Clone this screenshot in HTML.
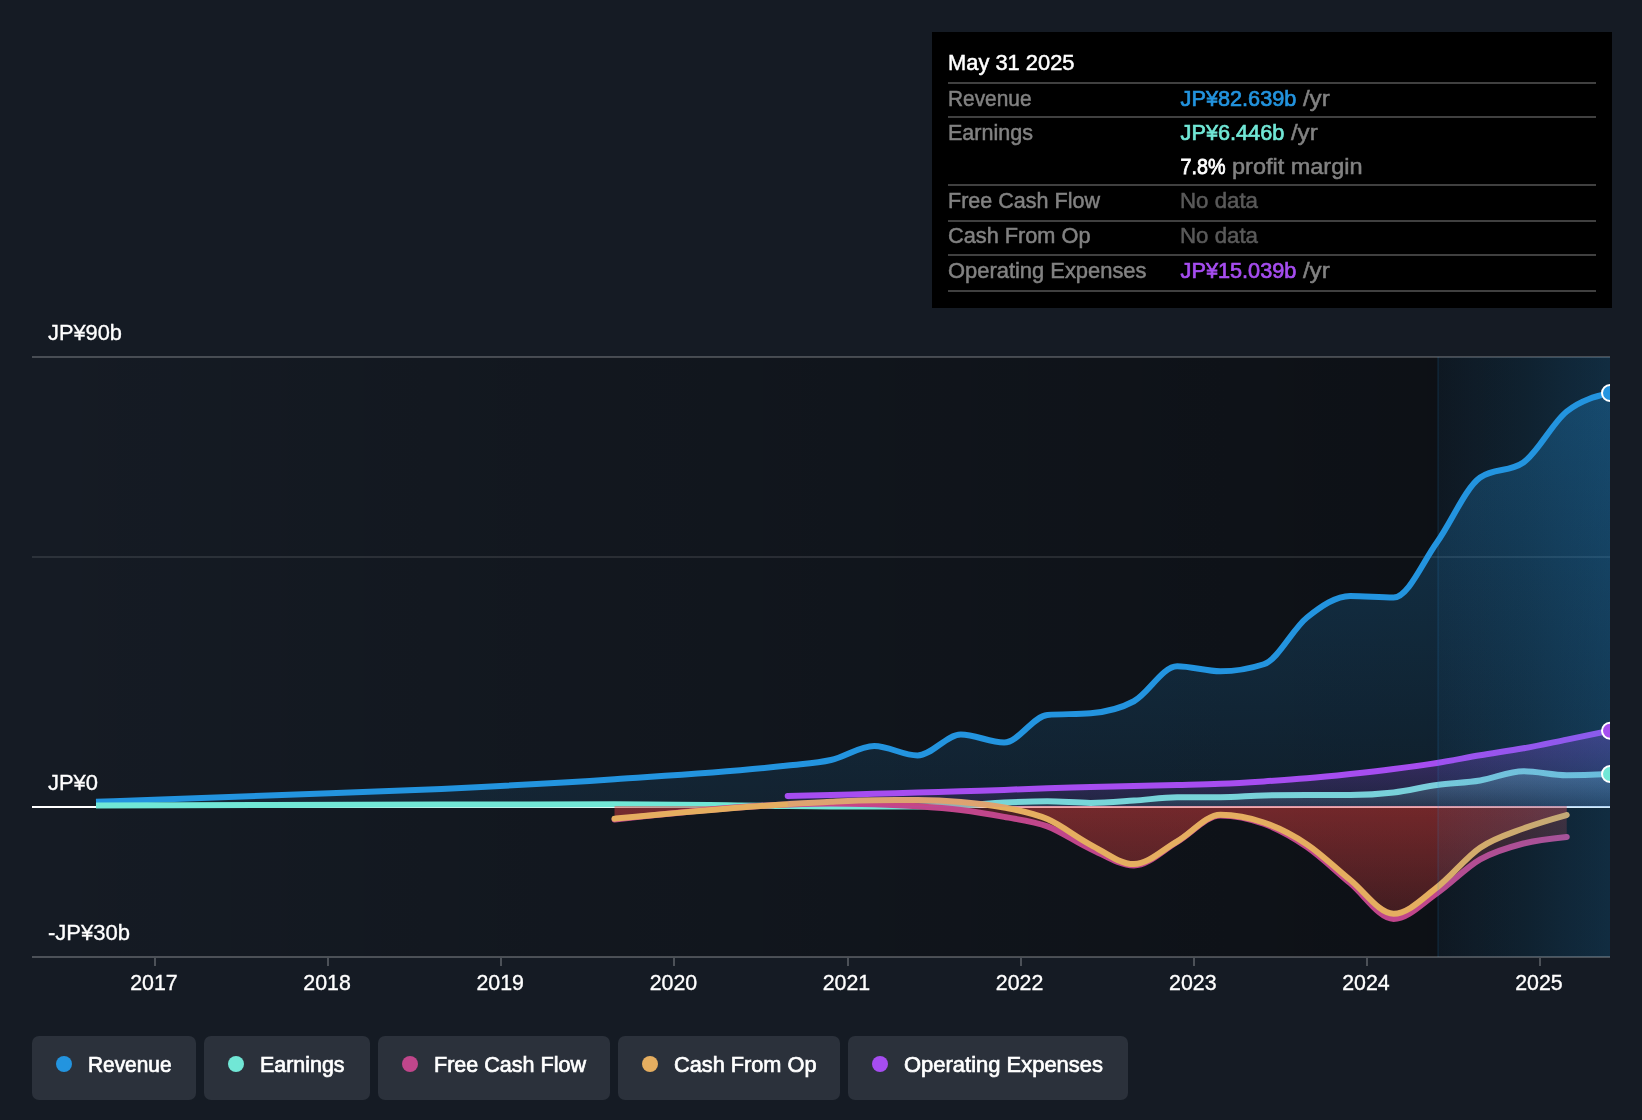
<!DOCTYPE html>
<html lang="en"><head><meta charset="utf-8"><title>Earnings and Revenue History</title>
<style>html,body{margin:0;padding:0;background:#151b24;}body{width:1642px;height:1120px;overflow:hidden;}svg{display:block;will-change:transform;}text{font-family:'Liberation Sans', sans-serif;font-size:22px;}</style>
</head><body>
<svg width="1642" height="1120" viewBox="0 0 1642 1120">
<defs>
<linearGradient id="gPlot" x1="0" y1="0" x2="1" y2="0"><stop offset="0" stop-color="#000" stop-opacity="0"/><stop offset="1" stop-color="#000" stop-opacity="0.44"/></linearGradient>
<linearGradient id="gRev" gradientUnits="userSpaceOnUse" x1="0" y1="393" x2="0" y2="807"><stop offset="0" stop-color="#2394df" stop-opacity="0.29"/><stop offset="1" stop-color="#2394df" stop-opacity="0.10"/></linearGradient>
<linearGradient id="gEar" gradientUnits="userSpaceOnUse" x1="0" y1="771" x2="0" y2="807"><stop offset="0" stop-color="#71e7d6" stop-opacity="0.35"/><stop offset="1" stop-color="#71e7d6" stop-opacity="0.10"/></linearGradient>
<linearGradient id="gOpx" gradientUnits="userSpaceOnUse" x1="0" y1="730" x2="0" y2="807"><stop offset="0" stop-color="#a64df0" stop-opacity="0.35"/><stop offset="1" stop-color="#a64df0" stop-opacity="0.10"/></linearGradient>
<linearGradient id="gRed" gradientUnits="userSpaceOnUse" x1="0" y1="806" x2="0" y2="920"><stop offset="0" stop-color="#e64141" stop-opacity="0.27"/><stop offset="1" stop-color="#e64141" stop-opacity="0.12"/></linearGradient>
<linearGradient id="gHi" x1="0" y1="0" x2="1" y2="0"><stop offset="0" stop-color="#2394df" stop-opacity="0.06"/><stop offset="0.5" stop-color="#2394df" stop-opacity="0.13"/><stop offset="1" stop-color="#2394df" stop-opacity="0.22"/></linearGradient>
<clipPath id="cp"><rect x="32" y="340" width="1578" height="640"/></clipPath>
</defs>
<rect width="1642" height="1120" fill="#151b24"/>
<rect x="32" y="357" width="1578" height="600" fill="url(#gPlot)"/>
<rect x="32" y="356" width="1578" height="2" fill="#fff" fill-opacity="0.22"/>
<rect x="32" y="556" width="1578" height="2" fill="#fff" fill-opacity="0.10"/>
<rect x="32" y="806" width="1578" height="2" fill="#fff"/>
<g clip-path="url(#cp)" fill="none" stroke-width="6" stroke-linejoin="round">
<path d="M96.00,801.75C153.44,799.69 210.88,797.64 268.32,795.50C326.03,793.35 383.73,791.62 441.44,788.90C499.15,786.18 556.85,783.10 614.56,779.20C672.27,775.30 729.97,772.28 787.68,765.50C802.11,763.80 816.53,763.25 830.96,760.00C845.39,756.75 859.81,746.00 874.24,746.00C888.67,746.00 903.09,755.50 917.52,755.50C931.95,755.50 946.37,734.50 960.80,734.50C975.23,734.50 989.65,742.50 1004.08,742.50C1018.51,742.50 1032.93,716.17 1047.36,715.00C1061.79,713.83 1076.21,714.42 1090.64,713.25C1105.07,712.08 1119.49,709.08 1133.92,701.25C1148.35,693.42 1162.77,666.25 1177.20,666.25C1191.63,666.25 1206.05,671.25 1220.48,671.25C1234.91,671.25 1249.33,668.92 1263.76,664.25C1278.19,659.58 1292.61,628.88 1307.04,617.50C1321.47,606.12 1335.89,596.00 1350.32,596.00C1364.75,596.00 1379.17,597.50 1393.60,597.50C1408.03,597.50 1422.45,562.50 1436.88,542.50C1451.31,522.50 1465.73,487.50 1480.16,477.50C1494.59,467.50 1509.01,472.50 1523.44,462.50C1537.87,452.50 1552.29,423.08 1566.72,411.50C1581.15,399.92 1595.57,396.46 1610.00,393.00L1610.00,807.00 L96.00,807.00 Z" fill="url(#gRev)"/>
<path d="M96.00,801.75C153.44,799.69 210.88,797.64 268.32,795.50C326.03,793.35 383.73,791.62 441.44,788.90C499.15,786.18 556.85,783.10 614.56,779.20C672.27,775.30 729.97,772.28 787.68,765.50C802.11,763.80 816.53,763.25 830.96,760.00C845.39,756.75 859.81,746.00 874.24,746.00C888.67,746.00 903.09,755.50 917.52,755.50C931.95,755.50 946.37,734.50 960.80,734.50C975.23,734.50 989.65,742.50 1004.08,742.50C1018.51,742.50 1032.93,716.17 1047.36,715.00C1061.79,713.83 1076.21,714.42 1090.64,713.25C1105.07,712.08 1119.49,709.08 1133.92,701.25C1148.35,693.42 1162.77,666.25 1177.20,666.25C1191.63,666.25 1206.05,671.25 1220.48,671.25C1234.91,671.25 1249.33,668.92 1263.76,664.25C1278.19,659.58 1292.61,628.88 1307.04,617.50C1321.47,606.12 1335.89,596.00 1350.32,596.00C1364.75,596.00 1379.17,597.50 1393.60,597.50C1408.03,597.50 1422.45,562.50 1436.88,542.50C1451.31,522.50 1465.73,487.50 1480.16,477.50C1494.59,467.50 1509.01,472.50 1523.44,462.50C1537.87,452.50 1552.29,423.08 1566.72,411.50C1581.15,399.92 1595.57,396.46 1610.00,393.00" stroke="#2394df"/>
<path d="M96.00,805.60C153.44,805.38 210.88,805.17 268.32,805.00C326.03,804.83 383.73,804.72 441.44,804.60C499.15,804.48 556.85,804.30 614.56,804.30C672.27,804.30 729.97,805.46 787.68,806.00C802.11,806.13 816.53,806.40 830.96,806.40C845.39,806.40 859.81,806.40 874.24,806.40C888.67,806.40 903.09,806.40 917.52,806.40C931.95,806.40 946.37,805.95 960.80,805.30C975.23,804.65 989.65,803.17 1004.08,802.50C1018.51,801.83 1032.93,801.25 1047.36,801.25C1061.79,801.25 1076.21,802.90 1090.64,802.90C1105.07,802.90 1119.49,801.54 1133.92,800.60C1148.35,799.66 1162.77,797.25 1177.20,797.25C1191.63,797.25 1206.05,797.25 1220.48,797.25C1234.91,797.25 1249.33,795.83 1263.76,795.50C1278.19,795.17 1292.61,795.00 1307.04,795.00C1321.47,795.00 1335.89,795.00 1350.32,795.00C1364.75,795.00 1379.17,794.17 1393.60,792.50C1408.03,790.83 1422.45,787.00 1436.88,785.00C1451.31,783.00 1465.73,782.79 1480.16,780.50C1494.59,778.21 1509.01,771.25 1523.44,771.25C1537.87,771.25 1552.29,775.20 1566.72,775.20C1581.15,775.20 1595.57,774.60 1610.00,774.00L1610.00,807.00 L96.00,807.00 Z" fill="url(#gEar)"/>
<path d="M96.00,805.60C153.44,805.38 210.88,805.17 268.32,805.00C326.03,804.83 383.73,804.72 441.44,804.60C499.15,804.48 556.85,804.30 614.56,804.30C672.27,804.30 729.97,805.46 787.68,806.00C802.11,806.13 816.53,806.40 830.96,806.40C845.39,806.40 859.81,806.40 874.24,806.40C888.67,806.40 903.09,806.40 917.52,806.40C931.95,806.40 946.37,805.95 960.80,805.30C975.23,804.65 989.65,803.17 1004.08,802.50C1018.51,801.83 1032.93,801.25 1047.36,801.25C1061.79,801.25 1076.21,802.90 1090.64,802.90C1105.07,802.90 1119.49,801.54 1133.92,800.60C1148.35,799.66 1162.77,797.25 1177.20,797.25C1191.63,797.25 1206.05,797.25 1220.48,797.25C1234.91,797.25 1249.33,795.83 1263.76,795.50C1278.19,795.17 1292.61,795.00 1307.04,795.00C1321.47,795.00 1335.89,795.00 1350.32,795.00C1364.75,795.00 1379.17,794.17 1393.60,792.50C1408.03,790.83 1422.45,787.00 1436.88,785.00C1451.31,783.00 1465.73,782.79 1480.16,780.50C1494.59,778.21 1509.01,771.25 1523.44,771.25C1537.87,771.25 1552.29,775.20 1566.72,775.20C1581.15,775.20 1595.57,774.60 1610.00,774.00" stroke="#71e7d6"/>
<path d="M614.56,819.40C672.27,813.03 729.97,806.67 787.68,804.50C802.11,803.96 816.53,803.40 830.96,803.40C845.39,803.40 859.81,803.82 874.24,804.30C888.67,804.77 903.09,805.30 917.52,806.25C931.95,807.20 946.37,808.23 960.80,810.00C975.23,811.77 989.65,814.17 1004.08,816.90C1018.51,819.63 1032.93,821.05 1047.36,826.40C1061.79,831.75 1076.21,842.50 1090.64,849.00C1105.07,855.50 1119.49,865.40 1133.92,865.40C1148.35,865.40 1162.77,850.23 1177.20,841.90C1191.63,833.57 1206.05,815.40 1220.48,815.40C1234.91,815.40 1249.33,818.48 1263.76,823.75C1278.19,829.02 1292.61,837.08 1307.04,847.00C1321.47,856.92 1335.89,871.27 1350.32,883.25C1364.75,895.23 1379.17,918.90 1393.60,918.90C1408.03,918.90 1422.45,903.17 1436.88,893.25C1451.31,883.33 1465.73,867.69 1480.16,859.40C1494.59,851.11 1509.01,847.25 1523.44,843.50C1537.87,839.75 1552.29,838.33 1566.72,836.90L1566.72,806.00 L614.56,806.00 Z" fill="url(#gRed)"/>
<path d="M614.56,819.40C672.27,813.03 729.97,806.67 787.68,804.50C802.11,803.96 816.53,803.40 830.96,803.40C845.39,803.40 859.81,803.82 874.24,804.30C888.67,804.77 903.09,805.30 917.52,806.25C931.95,807.20 946.37,808.23 960.80,810.00C975.23,811.77 989.65,814.17 1004.08,816.90C1018.51,819.63 1032.93,821.05 1047.36,826.40C1061.79,831.75 1076.21,842.50 1090.64,849.00C1105.07,855.50 1119.49,865.40 1133.92,865.40C1148.35,865.40 1162.77,850.23 1177.20,841.90C1191.63,833.57 1206.05,815.40 1220.48,815.40C1234.91,815.40 1249.33,818.48 1263.76,823.75C1278.19,829.02 1292.61,837.08 1307.04,847.00C1321.47,856.92 1335.89,871.27 1350.32,883.25C1364.75,895.23 1379.17,918.90 1393.60,918.90C1408.03,918.90 1422.45,903.17 1436.88,893.25C1451.31,883.33 1465.73,867.69 1480.16,859.40C1494.59,851.11 1509.01,847.25 1523.44,843.50C1537.87,839.75 1552.29,838.33 1566.72,836.90" stroke="#c0468b" stroke-linecap="round"/>
<path d="M614.56,818.70C672.27,813.27 729.97,807.83 787.68,804.20C802.11,803.29 816.53,802.37 830.96,801.70C845.39,801.03 859.81,800.27 874.24,800.20C888.67,800.13 903.09,800.10 917.52,800.10C931.95,800.10 946.37,800.70 960.80,801.90C975.23,803.10 989.65,804.63 1004.08,807.50C1018.51,810.37 1032.93,812.88 1047.36,819.10C1061.79,825.32 1076.21,837.30 1090.64,844.80C1105.07,852.30 1119.49,864.10 1133.92,864.10C1148.35,864.10 1162.77,849.52 1177.20,841.30C1191.63,833.07 1206.05,814.75 1220.48,814.75C1234.91,814.75 1249.33,817.56 1263.76,822.50C1278.19,827.44 1292.61,834.82 1307.04,844.40C1321.47,853.98 1335.89,868.44 1350.32,880.00C1364.75,891.56 1379.17,913.75 1393.60,913.75C1408.03,913.75 1422.45,898.49 1436.88,887.50C1451.31,876.51 1465.73,857.63 1480.16,847.80C1494.59,837.97 1509.01,833.97 1523.44,828.50C1537.87,823.03 1552.29,819.02 1566.72,815.00L1566.72,806.00 L614.56,806.00 Z" fill="url(#gRed)"/>
<path d="M614.56,818.70C672.27,813.27 729.97,807.83 787.68,804.20C802.11,803.29 816.53,802.37 830.96,801.70C845.39,801.03 859.81,800.27 874.24,800.20C888.67,800.13 903.09,800.10 917.52,800.10C931.95,800.10 946.37,800.70 960.80,801.90C975.23,803.10 989.65,804.63 1004.08,807.50C1018.51,810.37 1032.93,812.88 1047.36,819.10C1061.79,825.32 1076.21,837.30 1090.64,844.80C1105.07,852.30 1119.49,864.10 1133.92,864.10C1148.35,864.10 1162.77,849.52 1177.20,841.30C1191.63,833.07 1206.05,814.75 1220.48,814.75C1234.91,814.75 1249.33,817.56 1263.76,822.50C1278.19,827.44 1292.61,834.82 1307.04,844.40C1321.47,853.98 1335.89,868.44 1350.32,880.00C1364.75,891.56 1379.17,913.75 1393.60,913.75C1408.03,913.75 1422.45,898.49 1436.88,887.50C1451.31,876.51 1465.73,857.63 1480.16,847.80C1494.59,837.97 1509.01,833.97 1523.44,828.50C1537.87,823.03 1552.29,819.02 1566.72,815.00" stroke="#e5ae60" stroke-linecap="round"/>
<path d="M787.68,796.00C802.11,795.68 816.53,795.37 830.96,795.00C845.39,794.63 859.81,794.20 874.24,793.80C888.67,793.40 903.09,793.02 917.52,792.60C931.95,792.18 946.37,791.75 960.80,791.30C975.23,790.85 989.65,790.42 1004.08,789.90C1018.51,789.38 1032.93,788.68 1047.36,788.20C1061.79,787.72 1076.21,787.37 1090.64,787.00C1105.07,786.63 1119.49,786.33 1133.92,786.00C1148.35,785.67 1162.77,785.37 1177.20,785.00C1191.63,784.63 1206.05,784.40 1220.48,783.80C1234.91,783.20 1249.33,782.32 1263.76,781.40C1278.19,780.48 1292.61,779.53 1307.04,778.30C1321.47,777.07 1335.89,775.55 1350.32,774.00C1364.75,772.45 1379.17,770.83 1393.60,769.00C1408.03,767.17 1422.45,765.28 1436.88,763.00C1451.31,760.72 1465.73,757.75 1480.16,755.30C1494.59,752.85 1509.01,750.92 1523.44,748.30C1537.87,745.68 1552.29,742.52 1566.72,739.60C1581.15,736.68 1595.57,733.71 1610.00,730.75L1610.00,807.00 L787.68,807.00 Z" fill="url(#gOpx)"/>
<path d="M787.68,796.00C802.11,795.68 816.53,795.37 830.96,795.00C845.39,794.63 859.81,794.20 874.24,793.80C888.67,793.40 903.09,793.02 917.52,792.60C931.95,792.18 946.37,791.75 960.80,791.30C975.23,790.85 989.65,790.42 1004.08,789.90C1018.51,789.38 1032.93,788.68 1047.36,788.20C1061.79,787.72 1076.21,787.37 1090.64,787.00C1105.07,786.63 1119.49,786.33 1133.92,786.00C1148.35,785.67 1162.77,785.37 1177.20,785.00C1191.63,784.63 1206.05,784.40 1220.48,783.80C1234.91,783.20 1249.33,782.32 1263.76,781.40C1278.19,780.48 1292.61,779.53 1307.04,778.30C1321.47,777.07 1335.89,775.55 1350.32,774.00C1364.75,772.45 1379.17,770.83 1393.60,769.00C1408.03,767.17 1422.45,765.28 1436.88,763.00C1451.31,760.72 1465.73,757.75 1480.16,755.30C1494.59,752.85 1509.01,750.92 1523.44,748.30C1537.87,745.68 1552.29,742.52 1566.72,739.60C1581.15,736.68 1595.57,733.71 1610.00,730.75" stroke="#a64df0" stroke-linecap="round"/>
<rect x="1438" y="357" width="172" height="600" fill="url(#gHi)"/>
<rect x="1437" y="357" width="2" height="600" fill="#2394df" fill-opacity="0.10"/>
<circle cx="1610" cy="393.00" r="8" fill="#2394df" stroke="#fff" stroke-width="2"/>
<circle cx="1610" cy="730.75" r="8" fill="#a64df0" stroke="#fff" stroke-width="2"/>
<circle cx="1610" cy="774.00" r="8" fill="#71e7d6" stroke="#fff" stroke-width="2"/>
</g>
<rect x="32" y="956" width="1578" height="2" fill="#fff" fill-opacity="0.24"/>
<rect x="154.0" y="958" width="2" height="8" fill="#fff" fill-opacity="0.24"/>
<rect x="327.0" y="958" width="2" height="8" fill="#fff" fill-opacity="0.24"/>
<rect x="500.0" y="958" width="2" height="8" fill="#fff" fill-opacity="0.24"/>
<rect x="673.0" y="958" width="2" height="8" fill="#fff" fill-opacity="0.24"/>
<rect x="847.0" y="958" width="2" height="8" fill="#fff" fill-opacity="0.24"/>
<rect x="1020.0" y="958" width="2" height="8" fill="#fff" fill-opacity="0.24"/>
<rect x="1193.0" y="958" width="2" height="8" fill="#fff" fill-opacity="0.24"/>
<rect x="1366.0" y="958" width="2" height="8" fill="#fff" fill-opacity="0.24"/>
<rect x="1539.0" y="958" width="2" height="8" fill="#fff" fill-opacity="0.24"/>
<text x="154.0" y="990" fill="#fff" stroke="#fff" stroke-width="0.35" text-anchor="middle" textLength="47.5" lengthAdjust="spacingAndGlyphs">2017</text>
<text x="327.1" y="990" fill="#fff" stroke="#fff" stroke-width="0.35" text-anchor="middle" textLength="47.5" lengthAdjust="spacingAndGlyphs">2018</text>
<text x="500.2" y="990" fill="#fff" stroke="#fff" stroke-width="0.35" text-anchor="middle" textLength="47.5" lengthAdjust="spacingAndGlyphs">2019</text>
<text x="673.4" y="990" fill="#fff" stroke="#fff" stroke-width="0.35" text-anchor="middle" textLength="47.5" lengthAdjust="spacingAndGlyphs">2020</text>
<text x="846.5" y="990" fill="#fff" stroke="#fff" stroke-width="0.35" text-anchor="middle" textLength="47.5" lengthAdjust="spacingAndGlyphs">2021</text>
<text x="1019.6" y="990" fill="#fff" stroke="#fff" stroke-width="0.35" text-anchor="middle" textLength="47.5" lengthAdjust="spacingAndGlyphs">2022</text>
<text x="1192.8" y="990" fill="#fff" stroke="#fff" stroke-width="0.35" text-anchor="middle" textLength="47.5" lengthAdjust="spacingAndGlyphs">2023</text>
<text x="1365.9" y="990" fill="#fff" stroke="#fff" stroke-width="0.35" text-anchor="middle" textLength="47.5" lengthAdjust="spacingAndGlyphs">2024</text>
<text x="1539.0" y="990" fill="#fff" stroke="#fff" stroke-width="0.35" text-anchor="middle" textLength="47.5" lengthAdjust="spacingAndGlyphs">2025</text>
<text x="48" y="340" fill="#fff" stroke="#fff" stroke-width="0.35" textLength="74" lengthAdjust="spacingAndGlyphs">JP¥90b</text>
<text x="48" y="790" fill="#fff" stroke="#fff" stroke-width="0.35" textLength="50" lengthAdjust="spacingAndGlyphs">JP¥0</text>
<text x="48" y="940" fill="#fff" stroke="#fff" stroke-width="0.35" textLength="82" lengthAdjust="spacingAndGlyphs">-JP¥30b</text>
<rect x="932" y="32" width="680" height="276" fill="#000"/>
<rect x="948" y="82" width="648" height="2" fill="#fff" fill-opacity="0.25"/>
<rect x="948" y="116" width="648" height="2" fill="#fff" fill-opacity="0.25"/>
<rect x="948" y="184" width="648" height="2" fill="#fff" fill-opacity="0.25"/>
<rect x="948" y="220" width="648" height="2" fill="#fff" fill-opacity="0.25"/>
<rect x="948" y="254" width="648" height="2" fill="#fff" fill-opacity="0.25"/>
<rect x="948" y="290" width="648" height="2" fill="#fff" fill-opacity="0.25"/>
<text x="948" y="69.8" fill="#fff" stroke="#fff" stroke-width="0.5" textLength="126.5" lengthAdjust="spacingAndGlyphs">May 31 2025</text>
<text x="948" y="105.8" fill="#828282" stroke="#828282" stroke-width="0.5" textLength="83.5" lengthAdjust="spacingAndGlyphs">Revenue</text>
<text x="948" y="139.6" fill="#828282" stroke="#828282" stroke-width="0.5" textLength="85" lengthAdjust="spacingAndGlyphs">Earnings</text>
<text x="948" y="207.6" fill="#828282" stroke="#828282" stroke-width="0.5" textLength="152" lengthAdjust="spacingAndGlyphs">Free Cash Flow</text>
<text x="948" y="243.3" fill="#828282" stroke="#828282" stroke-width="0.5" textLength="142.5" lengthAdjust="spacingAndGlyphs">Cash From Op</text>
<text x="948" y="277.6" fill="#828282" stroke="#828282" stroke-width="0.5" textLength="198.5" lengthAdjust="spacingAndGlyphs">Operating Expenses</text>
<text x="1180.6" y="105.8" fill="#2394df" stroke="#2394df" stroke-width="0.7" textLength="115.7" lengthAdjust="spacingAndGlyphs">JP¥82.639b</text>
<text x="1302.9" y="105.8" fill="#828282" stroke="#828282" stroke-width="0.5" textLength="26.8" lengthAdjust="spacingAndGlyphs">/yr</text>
<text x="1180.6" y="139.6" fill="#71e7d6" stroke="#71e7d6" stroke-width="0.7" textLength="103.7" lengthAdjust="spacingAndGlyphs">JP¥6.446b</text>
<text x="1290.9" y="139.6" fill="#828282" stroke="#828282" stroke-width="0.5" textLength="26.8" lengthAdjust="spacingAndGlyphs">/yr</text>
<text x="1180.6" y="173.8" fill="#fff" stroke="#fff" stroke-width="0.8" textLength="45" lengthAdjust="spacingAndGlyphs">7.8%</text>
<text x="1232" y="173.8" fill="#828282" stroke="#828282" stroke-width="0.5" textLength="130.5" lengthAdjust="spacingAndGlyphs">profit margin</text>
<text x="1180" y="207.6" fill="#5a5a5a" stroke="#5a5a5a" stroke-width="0.5" textLength="78" lengthAdjust="spacingAndGlyphs">No data</text>
<text x="1180" y="243.3" fill="#5a5a5a" stroke="#5a5a5a" stroke-width="0.5" textLength="78" lengthAdjust="spacingAndGlyphs">No data</text>
<text x="1180.6" y="277.6" fill="#a64df0" stroke="#a64df0" stroke-width="0.7" textLength="115.7" lengthAdjust="spacingAndGlyphs">JP¥15.039b</text>
<text x="1302.9" y="277.6" fill="#828282" stroke="#828282" stroke-width="0.5" textLength="26.8" lengthAdjust="spacingAndGlyphs">/yr</text>
<rect x="32" y="1036" width="164" height="64" rx="7" fill="#2b313b"/>
<circle cx="64" cy="1064" r="8" fill="#2394df"/>
<text x="88" y="1072" fill="#fff" stroke="#fff" stroke-width="0.7" textLength="83.5" lengthAdjust="spacingAndGlyphs">Revenue</text>
<rect x="204" y="1036" width="166" height="64" rx="7" fill="#2b313b"/>
<circle cx="236" cy="1064" r="8" fill="#71e7d6"/>
<text x="260" y="1072" fill="#fff" stroke="#fff" stroke-width="0.7" textLength="84.5" lengthAdjust="spacingAndGlyphs">Earnings</text>
<rect x="378" y="1036" width="232" height="64" rx="7" fill="#2b313b"/>
<circle cx="410" cy="1064" r="8" fill="#c0468b"/>
<text x="434" y="1072" fill="#fff" stroke="#fff" stroke-width="0.7" textLength="152" lengthAdjust="spacingAndGlyphs">Free Cash Flow</text>
<rect x="618" y="1036" width="222" height="64" rx="7" fill="#2b313b"/>
<circle cx="650" cy="1064" r="8" fill="#e5ae60"/>
<text x="674" y="1072" fill="#fff" stroke="#fff" stroke-width="0.7" textLength="142.5" lengthAdjust="spacingAndGlyphs">Cash From Op</text>
<rect x="848" y="1036" width="280" height="64" rx="7" fill="#2b313b"/>
<circle cx="880" cy="1064" r="8" fill="#a64df0"/>
<text x="904" y="1072" fill="#fff" stroke="#fff" stroke-width="0.7" textLength="199" lengthAdjust="spacingAndGlyphs">Operating Expenses</text>
</svg>
</body></html>
